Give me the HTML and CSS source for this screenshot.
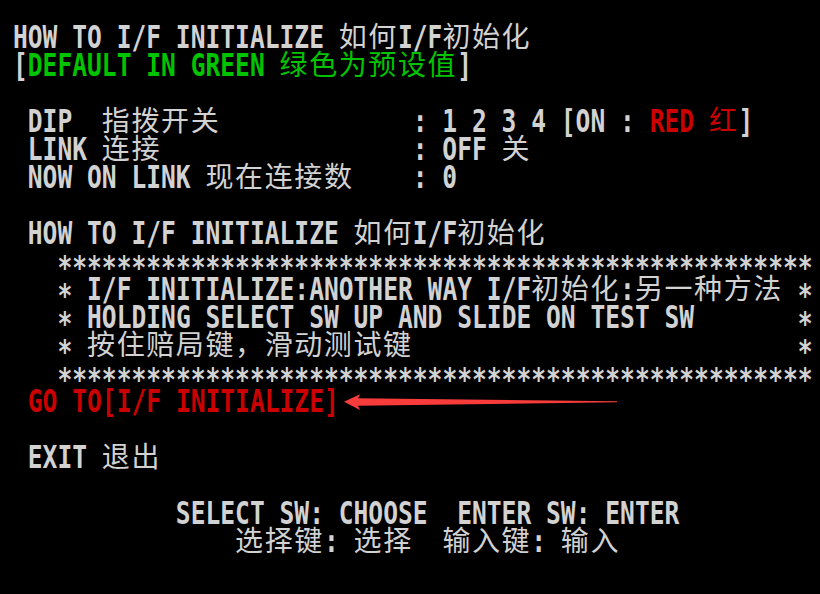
FILE: index.html
```html
<html lang="zh">
<head>
  <meta charset="UTF-8" />
  <meta name="viewport" content="width=device-width, initial-scale=1.0" />
  <title>I/F Initialize</title>
  <link rel="stylesheet" href="styles.css">
</head>
<body>
  <div class="screen">
    <div class="row">HOW TO I/F INITIALIZE <span class="zh">如何</span>I/F<span class="zh">初始化</span></div>
    <div class="row">[<span class="green">DEFAULT IN GREEN <span class="zh">绿色为预设值</span></span>]</div>
    <div class="row"></div>
    <div class="row"> DIP  <span class="zh">指拨开关</span>             : 1 2 3 4 [ON : <span class="red">RED <span class="zh">红</span></span>]</div>
    <div class="row"> LINK <span class="zh">连接</span>                 : OFF <span class="zh">关</span></div>
    <div class="row"> NOW ON LINK <span class="zh">现在连接数</span>    : 0</div>
    <div class="row"></div>
    <div class="row"> HOW TO I/F INITIALIZE <span class="zh">如何</span>I/F<span class="zh">初始化</span></div>
    <div class="row">   <span class="star">***************************************************</span></div>
    <div class="row">   <span class="star">*</span> I/F INITIALIZE:ANOTHER WAY I/F<span class="zh">初始化</span>:<span class="zh">另一种方法</span> <span class="star">*</span></div>
    <div class="row">   <span class="star">*</span> HOLDING SELECT SW UP AND SLIDE ON TEST SW       <span class="star">*</span></div>
    <div class="row">   <span class="star">*</span> <span class="zh">按住赔局键，滑动测试键</span>                          <span class="star">*</span></div>
    <div class="row">   <span class="star">***************************************************</span></div>
    <div class="row"> <span class="red">GO TO[I/F INITIALIZE]</span></div>
    <div class="row"></div>
    <div class="row"> EXIT <span class="zh">退出</span></div>
    <div class="row"></div>
    <div class="row">           SELECT SW: CHOOSE  ENTER SW: ENTER</div>
    <div class="row">               <span class="zh">选择键</span>: <span class="zh">选择</span>  <span class="zh">输入键</span>: <span class="zh">输入</span></div>

    <!-- annotation arrow pointing at the selected item -->
    <svg class="arrow" width="280" height="24" viewBox="0 0 280 24">
      <polygon points="4,11.7 20,4.3 18,8.3 277,11.3 277,12.3 18,15.7 20,20" fill="#f83b3b" />
    </svg>
  </div>
</body>
</html>
```

FILE: styles.css
```css
body {
  margin: 0;
  background: #000;
}
.screen {
  position: relative;
  height: 594px;
  padding: 24px 0 0 13px;
  box-sizing: border-box;
  font-family: 'DejaVu Sans Mono', 'Liberation Mono', monospace;
  font-weight: bold;
  font-size: 24.6px;
  color: #d2d2d2;
}
.row {
  height: 28px;
  line-height: 28px;
  white-space: pre;
  transform: scaleY(1.31);
}
.zh {
  display: inline-block;
  font-family: 'Noto Sans CJK SC', sans-serif;
  font-weight: normal;
  font-size: 28px;
  line-height: 20px;
  letter-spacing: 1.6px;
  transform: translateY(1.5px) scaleY(0.763);
}
.star {
  vertical-align: -4.5px;
}
.green {
  color: #00c400;
}
.red {
  color: #cc0000;
}
.arrow {
  position: absolute;
  left: 340px;
  top: 390px;
}
```
